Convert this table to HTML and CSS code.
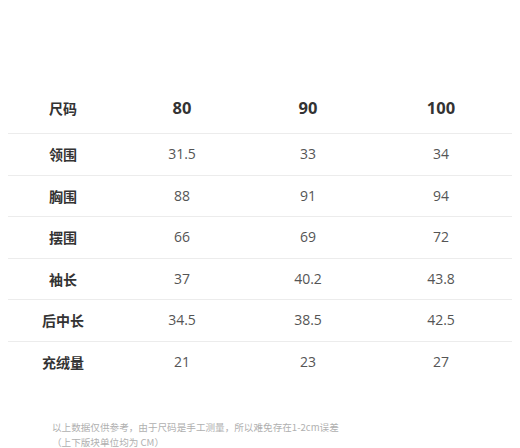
FILE: index.html
```html
<!DOCTYPE html>
<html lang="zh">
<head>
<meta charset="utf-8">
<link rel="stylesheet" href="styles.css">
</head>
<body>
<div class="page">
  <div class="table">
    <div class="row head">
      <div class="cell label">尺码</div>
      <div class="cell">80</div>
      <div class="cell">90</div>
      <div class="cell">100</div>
    </div>
    <div class="row">
      <div class="cell label">领围</div>
      <div class="cell">31.5</div>
      <div class="cell">33</div>
      <div class="cell">34</div>
    </div>
    <div class="row">
      <div class="cell label">胸围</div>
      <div class="cell">88</div>
      <div class="cell">91</div>
      <div class="cell">94</div>
    </div>
    <div class="row">
      <div class="cell label">摆围</div>
      <div class="cell">66</div>
      <div class="cell">69</div>
      <div class="cell">72</div>
    </div>
    <div class="row">
      <div class="cell label">袖长</div>
      <div class="cell">37</div>
      <div class="cell">40.2</div>
      <div class="cell">43.8</div>
    </div>
    <div class="row">
      <div class="cell label">后中长</div>
      <div class="cell">34.5</div>
      <div class="cell">38.5</div>
      <div class="cell">42.5</div>
    </div>
    <div class="row">
      <div class="cell label">充绒量</div>
      <div class="cell">21</div>
      <div class="cell">23</div>
      <div class="cell">27</div>
    </div>
  </div>
  <div class="note">
    <p>以上数据仅供参考，由于尺码是手工测量，所以难免存在1-2cm误差</p>
    <p>（上下版块单位均为 CM）</p>
  </div>
</div>
</body>
</html>
```
FILE: styles.css
```css
html, body {
  margin: 0;
  padding: 0;
  background: #fff;
}
.page {
  width: 520px;
  height: 448px;
  overflow: hidden;
  padding: 82px 8px 0 8px;
  box-sizing: border-box;
  font-family: "Open Sans", "Noto Sans CJK SC", sans-serif;
}
.table {
  display: flex;
  flex-direction: column;
  width: 504px;
}
.row {
  display: grid;
  grid-template-columns: 110px 128px 124px 142px;
  height: 41.5px;
  align-items: center;
  border-top: 1px solid #ececec;
  box-sizing: border-box;
  color: #555;
  font-size: 14px;
}
.row.head {
  height: 51px;
  border-top: none;
  font-size: 16.5px;
  font-weight: 700;
  color: #333;
}
.cell {
  text-align: center;
  line-height: 20px;
}
.cell.label {
  font-weight: 700;
  color: #333;
  font-size: 14px;
  font-family: "Noto Sans CJK SC", sans-serif;
}
.note {
  margin-top: 38px;
  padding-left: 44px;
  color: #b0b0b0;
  font-size: 9.6px;
  line-height: 15px;
  font-family: "Noto Sans CJK SC", sans-serif;
}
.note p {
  margin: 0;
}
```
